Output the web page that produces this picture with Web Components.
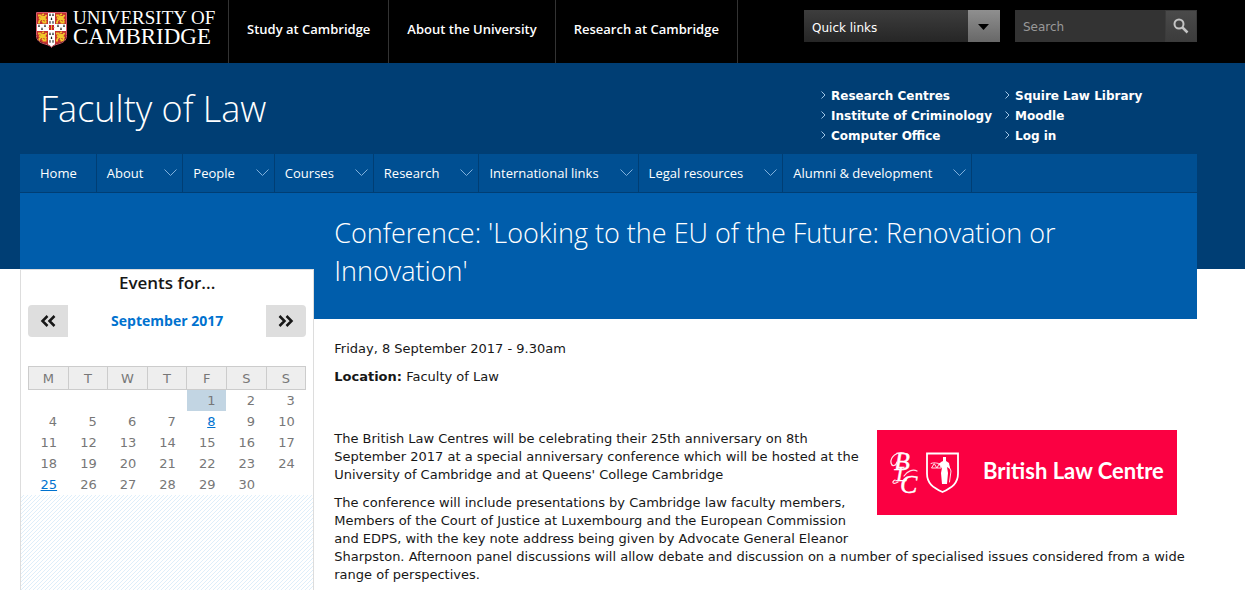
<!DOCTYPE html>
<html lang="en">
<head>
<meta charset="utf-8">
<title>Conference | Faculty of Law</title>
<style>
:root {
  --heading: 'Open Sans', 'Noto Sans', sans-serif;
  --body: 'DejaVu Sans', Verdana, sans-serif;
  --dark: #003e74;
  --mid: #004f92;
  --blue: #005dab;
  --link: #0072cf;
  --gutter: 0 48px 0 20px;
}

body {
  margin: 0;
  min-height: 100vh;
  display: flex;
  flex-direction: column;
  background: #fff;
  color: #171717;
  font: 13px/18px var(--body);
}

p {
  margin: 0 0 10px;
}

.intro {
  margin-bottom: 44px;
}
</style>
</head>
<body>

<global-header>
  <a slot="links" href="#">Study at Cambridge</a>
  <a slot="links" href="#">About the University</a>
  <a slot="links" href="#">Research at Cambridge</a>
  <quick-links slot="tools"></quick-links>
  <site-search slot="tools"></site-search>
</global-header>

<site-banner heading="Faculty of Law">
  <a href="#">Research Centres</a>
  <a href="#">Squire Law Library</a>
  <a href="#">Institute of Criminology</a>
  <a href="#">Moodle</a>
  <a href="#">Computer Office</a>
  <a href="#">Log in</a>
</site-banner>

<nav-bar>
  <nav-tab plain>Home</nav-tab>
  <nav-tab>About</nav-tab>
  <nav-tab>People</nav-tab>
  <nav-tab>Courses</nav-tab>
  <nav-tab>Research</nav-tab>
  <nav-tab>International links</nav-tab>
  <nav-tab>Legal resources</nav-tab>
  <nav-tab>Alumni &amp; development</nav-tab>
</nav-bar>

<page-layout>
  <event-calendar slot="side" month="September 2017" offset="4" days="30" today="1" events="8,25"></event-calendar>
  <span slot="title">Conference: 'Looking to the EU of the Future: Renovation or Innovation'</span>
  <p>Friday, 8 September 2017 - 9.30am</p>
  <p class="intro"><b>Location:</b> Faculty of Law</p>
  <law-centre-logo></law-centre-logo>
  <p>The British Law Centres will be celebrating their 25th anniversary on 8th<br>
  September 2017 at a special anniversary conference which will be hosted at the<br>
  University of Cambridge and at Queens' College Cambridge</p>
  <p>The conference will include presentations by Cambridge law faculty members,<br>
  Members of the Court of Justice at Luxembourg and the European Commission<br>
  and EDPS, with the key note address being given by Advocate General Eleanor<br>
  Sharpston. Afternoon panel discussions will allow debate and discussion on a number of specialised issues considered from a wide range of perspectives.</p>
</page-layout>

<script>
/**
 * Base for all elements here: clones the given markup into an open shadow root.
 */
class BaseElement extends HTMLElement {
  constructor (markup) {
    super()
    const template = document.createElement('template')
    template.innerHTML = markup
    this.shadow = this.attachShadow({ mode: 'open' })
    this.shadow.appendChild(document.importNode(template.content, true))
  }
}

class UniversityLogo extends BaseElement {
  constructor () {
    super(`
<style>
:host {
  display: block;
}

a {
  display: flex;
  gap: 6px;
  color: #fff;
  text-decoration: none;
  font-family: 'Liberation Serif', 'Times New Roman', serif;
  white-space: nowrap;
}

svg {
  display: block;
  margin-top: 2px;
}

.name span {
  display: block;
  font-size: 19px;
  line-height: 16px;
}

.name span + span {
  font-size: 23px;
  line-height: 22px;
}
</style>
<a href="#">
<svg width="31" height="36" viewBox="0 0 31 36" aria-hidden="true">
  <defs>
    <clipPath id="shield"><path d="M1 1h29v22c0 5-3 7-8 8.500-3.500 1-5.500 2-6.500 3.500-1-1.500-3-2.500-6.500-3.500-5-1.500-8-3.500-8-8.500z"/></clipPath>
    <g id="lion" fill="none" stroke="#f1c62c" stroke-width="1.800">
      <path d="M1 2.500h2.500l1 1.500h3.500l1.500-2M2 4.500l2 1.500h4l1.500 1M4 6l-2 2.500M8 6.500l1 2.500M5 7.500l1.500 1.500M1 9.500h2M5.500 9.500h4M5 2l2-1"/>
    </g>
    <path id="spot" d="M0-1.800l.8 1.300-.4.200.5 1.400h-1.800l.5-1.400-.4-.2z" fill="#222"/>
  </defs>
  <g clip-path="url(#shield)">
    <path fill="#c4302e" d="M0 0h31v36H0z"/>
    <use href="#lion" x="1" y="1"/><use href="#lion" x="19" y="1"/>
    <use href="#lion" x="1" y="19"/><use href="#lion" x="19" y="19"/>
    <path fill="#fff" d="M12 0h7v12h12v7H19v17h-7V19H0v-7h12z"/>
    <use href="#spot" x="14" y="3"/><use href="#spot" x="17" y="3"/><use href="#spot" x="15.500" y="7"/>
    <use href="#spot" x="14" y="10.500"/><use href="#spot" x="17" y="10.500"/>
    <use href="#spot" x="3" y="14"/><use href="#spot" x="6" y="17"/><use href="#spot" x="9" y="14"/>
    <use href="#spot" x="22" y="14"/><use href="#spot" x="25" y="17"/><use href="#spot" x="28" y="14"/>
    <use href="#spot" x="14" y="22"/><use href="#spot" x="17" y="22"/><use href="#spot" x="15.500" y="26"/>
    <use href="#spot" x="14" y="29.500"/><use href="#spot" x="17" y="29.500"/>
    <path fill="#c8202f" d="M13 13h5v5h-5z"/>
    <path stroke="#e9b93a" d="M15.500 13v5M12.500 15.500h1M17.500 15.500h1"/>
  </g>
  <path d="M.500.500h30v23c0 5-3 7-8.500 8.500-3.500 1-5.500 2-6.500 3.500-1-1.500-3-2.500-6.500-3.500C3.500 30.500.500 28.500.500 23.500z" fill="none" stroke="#d4596a"/>
</svg>
<span class="name"><span>UNIVERSITY OF</span><span>CAMBRIDGE</span></span>
</a>`)
  }
}

class GlobalHeader extends BaseElement {
  constructor () {
    super(`
<style>
:host {
  display: block;
  background: #000;
  padding: var(--gutter);
}

header {
  display: flex;
  min-height: 63px;
}

university-logo {
  padding: 10px 0 0 16px;
  box-sizing: border-box;
  width: 208px;
}

nav {
  display: flex;
  border-left: 1px solid #333;
}

::slotted(a) {
  padding: 19px 18px 0;
  border-right: 1px solid #333;
  color: #fff;
  font: 600 13px/20px var(--heading);
  text-decoration: none;
  white-space: nowrap;
}

.tools {
  display: flex;
  gap: 15px;
  margin-left: auto;
  padding-top: 10px;
}
</style>
<header>
  <university-logo></university-logo>
  <nav><slot name="links"></slot></nav>
  <div class="tools"><slot name="tools"></slot></div>
</header>`)
  }
}

class QuickLinks extends BaseElement {
  constructor () {
    super(`
<style>
:host {
  display: block;
  position: relative;
  width: 196px;
  height: 32px;
}

select {
  appearance: none;
  width: 100%;
  height: 100%;
  padding: 3px 40px 0 8px;
  border: 0;
  border-radius: 0;
  background:
    linear-gradient(#8f8f8f, #686868) right / 32px 100% no-repeat,
    linear-gradient(#3d3d3d, #262626);
  color: #fff;
  font: 12px/18px var(--body);
}

svg {
  position: absolute;
  top: 14px;
  right: 11px;
  pointer-events: none;
}
</style>
<select aria-label="Quick links"><option>Quick links</option></select>
<svg width="11" height="6" viewBox="0 0 11 6"><path d="M0 0h11L5.500 6z"/></svg>`)
  }
}

class SiteSearch extends BaseElement {
  constructor () {
    super(`
<style>
:host {
  display: block;
}

form {
  display: flex;
  height: 32px;
}

input {
  width: 150px;
  box-sizing: border-box;
  padding: 2px 8px 0;
  border: 0;
  background: #333;
  color: #fff;
  font: 12px/18px var(--body);
}

input::placeholder {
  color: #999;
  opacity: 1;
}

button {
  width: 32px;
  padding: 0;
  border: 1px solid #3b3b3b;
  background: linear-gradient(#4a4a4a, #3c3c3c);
}

svg {
  display: block;
  margin: 0 auto;
}
</style>
<form>
  <input type="search" placeholder="Search" aria-label="Search">
  <button type="button" aria-label="Search">
    <svg width="16" height="16" viewBox="0 0 16 16" fill="none" stroke="#c4c4c4">
      <circle cx="6" cy="6" r="4.500" stroke-width="2"/>
      <path d="M9.500 9.500l5 5" stroke-width="2.500"/>
    </svg>
  </button>
</form>`)
  }
}

class SiteBanner extends BaseElement {
  constructor () {
    super(`
<style>
:host {
  display: block;
  padding: var(--gutter);
  background: var(--dark);
}

div {
  display: flex;
  justify-content: space-between;
  min-height: 91px;
}

h1 {
  margin: 0;
  padding: 21px 0 0 20px;
  color: #fff;
  font: 300 36px/50px var(--heading);
}

section {
  display: grid;
  grid-template-columns: 184px 184px;
  grid-auto-rows: 20px;
  padding: 23px 9px 0 0;
}

::slotted(a) {
  padding-left: 11px;
  background: url("data:image/svg+xml,%3Csvg xmlns='http://www.w3.org/2000/svg' width='5' height='8'%3E%3Cpath d='M.5.5L4 4 .5 7.5' fill='none' stroke='%239fc4e4'/%3E%3C/svg%3E") 1px 5px no-repeat;
  color: #fff;
  font: bold 12px/20px var(--body);
  text-decoration: none;
  white-space: nowrap;
}
</style>
<div>
  <h1></h1>
  <section><slot></slot></section>
</div>`)
    this.shadow.querySelector('h1').textContent = this.getAttribute('heading')
  }
}

class NavBar extends BaseElement {
  constructor () {
    super(`
<style>
:host {
  display: block;
  padding: var(--gutter);
  background: var(--dark);
}

nav {
  display: flex;
  background: var(--mid);
  border-bottom: 1px solid var(--dark);
}
</style>
<nav><slot></slot></nav>`)
  }
}

class NavTab extends BaseElement {
  constructor () {
    super(`
<style>
:host {
  display: block;
  border-right: 1px solid var(--dark);
}

a {
  display: flex;
  align-items: center;
  gap: 21px;
  padding: 0 5px 0 10px;
  color: #fff;
  font: 13px/38px var(--heading);
  text-decoration: none;
  white-space: nowrap;
}

:host([plain]) a {
  padding: 0 19px 0 20px;
}

:host([plain]) svg {
  display: none;
}
</style>
<a href="#"><slot></slot>
<svg width="13" height="8" viewBox="0 0 13 8" fill="none" stroke="#7fb0dc"><path d="M.500.500l6 6 6-6"/></svg></a>`)
  }
}

class PageLayout extends BaseElement {
  constructor () {
    super(`
<style>
:host {
  display: flex;
  flex: 1;
  padding: var(--gutter);
  background: linear-gradient(var(--dark), var(--dark)) top / 100% 76px no-repeat;
}

main {
  flex: 1;
  display: grid;
  grid-template-columns: 25% 1fr;
}

aside {
  display: flex;
  flex-direction: column;
  padding-top: 76px;
  background: linear-gradient(var(--blue), var(--blue)) top / 100% 76px no-repeat;
}

.side {
  flex: 1;
  border: 1px solid #ddd;
  border-bottom: 0;
  background: #fff url("data:image/svg+xml,%3Csvg xmlns='http://www.w3.org/2000/svg' width='4' height='4' shape-rendering='crispEdges' fill='%23deeefa'%3E%3Cpath d='M3 0h1v1H3zM2 1h1v1H2zM1 2h1v1H1zM0 3h1v1H0z'/%3E%3C/svg%3E");
}

h2 {
  margin: 0;
  padding: 21px 20px 29px;
  background: var(--blue);
  color: #fff;
  font: 300 27px/38px var(--heading);
}

/* the title wraps before it reaches the right edge */
h2 slot {
  display: block;
  max-width: 740px;
}

article {
  padding: 21px 0 0 20px;
}
</style>
<main>
  <aside><div class="side"><slot name="side"></slot></div></aside>
  <div>
    <h2><slot name="title"></slot></h2>
    <article><slot></slot></article>
  </div>
</main>`)
  }
}

class EventCalendar extends BaseElement {
  constructor () {
    super(`
<style>
:host {
  display: block;
  padding: 0 7px;
  background: #fff;
}

h2 {
  margin: 0;
  text-align: center;
  font: 600 17px/26px var(--heading);
}

.pager {
  display: flex;
  align-items: center;
  justify-content: space-between;
  margin: 9px 0 29px;
}

button {
  width: 40px;
  height: 32px;
  padding: 0;
  border: 0;
  border-radius: 4px 0 0 4px;
  background: #dedede;
}

button:last-child {
  border-radius: 0 4px 4px 0;
}

svg {
  display: block;
  margin: 0 auto;
}

.pager a {
  color: var(--link);
  font: bold 14px/20px var(--heading);
  text-decoration: none;
}

table {
  width: 100%;
  table-layout: fixed;
  border-collapse: collapse;
  color: #777;
  font: 13px/21px var(--body);
}

th {
  height: 22px;
  padding: 0;
  border: 1px solid #ccc;
  background: #eee;
  font-weight: normal;
}

td {
  padding: 0 11px 0 0;
  text-align: right;
}

td.today {
  background: #c2d5e3;
}

td a {
  color: var(--link);
}
</style>
<h2>Events for...</h2>
<div class="pager">
  <button aria-label="Previous month"><svg width="16" height="12" viewBox="0 0 16 12" fill="none" stroke="#171717" stroke-width="2.500"><path d="M7.500 1l-5 5 5 5M14.500 1l-5 5 5 5"/></svg></button>
  <a href="#"></a>
  <button aria-label="Next month"><svg width="16" height="12" viewBox="0 0 16 12" fill="none" stroke="#171717" stroke-width="2.500"><path d="M1.500 1l5 5-5 5M8.500 1l5 5-5 5"/></svg></button>
</div>
<table>
  <thead><tr><th>M</th><th>T</th><th>W</th><th>T</th><th>F</th><th>S</th><th>S</th></tr></thead>
  <tbody></tbody>
</table>`)
    this.shadow.querySelector('.pager a').textContent = this.getAttribute('month')
    this._fillDays()
  }

  /**
   * Fills the table with weeks, offset is the number of empty cells before day 1.
   */
  _fillDays () {
    const body = this.shadow.querySelector('tbody')
    const offset = Number(this.getAttribute('offset'))
    const days = Number(this.getAttribute('days'))
    const events = this.getAttribute('events').split(',').map(Number)
    let row = null
    for (let i = 0; i < Math.ceil((offset + days) / 7) * 7; i++) {
      if (i % 7 === 0) {
        row = body.insertRow()
      }
      const cell = row.insertCell()
      const day = i - offset + 1
      if (day < 1 || day > days) continue
      if (day === Number(this.getAttribute('today'))) {
        cell.className = 'today'
      }
      if (events.includes(day)) {
        const a = document.createElement('a')
        a.href = '#'
        a.textContent = day
        cell.appendChild(a)
      } else {
        cell.textContent = day
      }
    }
  }
}

class LawCentreLogo extends BaseElement {
  constructor () {
    super(`
<style>
:host {
  display: block;
  float: right;
  margin: 0 20px 20px 12px;
}

svg {
  display: block;
}
</style>
<svg width="300" height="85" viewBox="0 0 300 85" role="img" aria-label="British Law Centre">
  <path fill="#fb0042" d="M0 0h300v85H0z"/>
  <g fill="#fff" stroke="#fff" stroke-width=".4" font-family="'Liberation Serif', serif" font-style="italic">
    <text x="17" y="40" font-size="26">B</text>
    <text x="19" y="51" font-size="22">L</text>
    <text x="23" y="63" font-size="26">C</text>
  </g>
  <g fill="none" stroke="#ffe3ea" stroke-width="1.200" stroke-linecap="round">
    <path d="M27 23c-7-2-14 4-13 10 1 4 5 3 6-1M18 50c-4 2-2 5 3 2M27 46c3-5 9-7 13-5"/>
    <path stroke="#fff" stroke-width="1.800" d="M50 23.500h31v20c0 10-6 14-15.500 18.500C56 57.500 50 53.500 50 43.500z"/>
    <path stroke-width="1" d="M54 33.500c4-2 8 1 11 0M57 34l-2.500 4h5zM62 34l-2 4h4zM71 34l3 7-1.500 11"/>
  </g>
  <path fill="#fff" d="M66 27h3v4l3 2 1 6-3-2 1 6-1 11h-5l-1-11 1-5-3-4 2-2 2-1z"/>
  <text x="106" y="49" fill="#fff" font-family="Lato, sans-serif" font-weight="700" font-size="22">British Law Centre</text>
</svg>`)
  }
}

window.customElements.define('university-logo', UniversityLogo)
window.customElements.define('global-header', GlobalHeader)
window.customElements.define('quick-links', QuickLinks)
window.customElements.define('site-search', SiteSearch)
window.customElements.define('site-banner', SiteBanner)
window.customElements.define('nav-bar', NavBar)
window.customElements.define('nav-tab', NavTab)
window.customElements.define('page-layout', PageLayout)
window.customElements.define('event-calendar', EventCalendar)
window.customElements.define('law-centre-logo', LawCentreLogo)
</script>
</body>
</html>
